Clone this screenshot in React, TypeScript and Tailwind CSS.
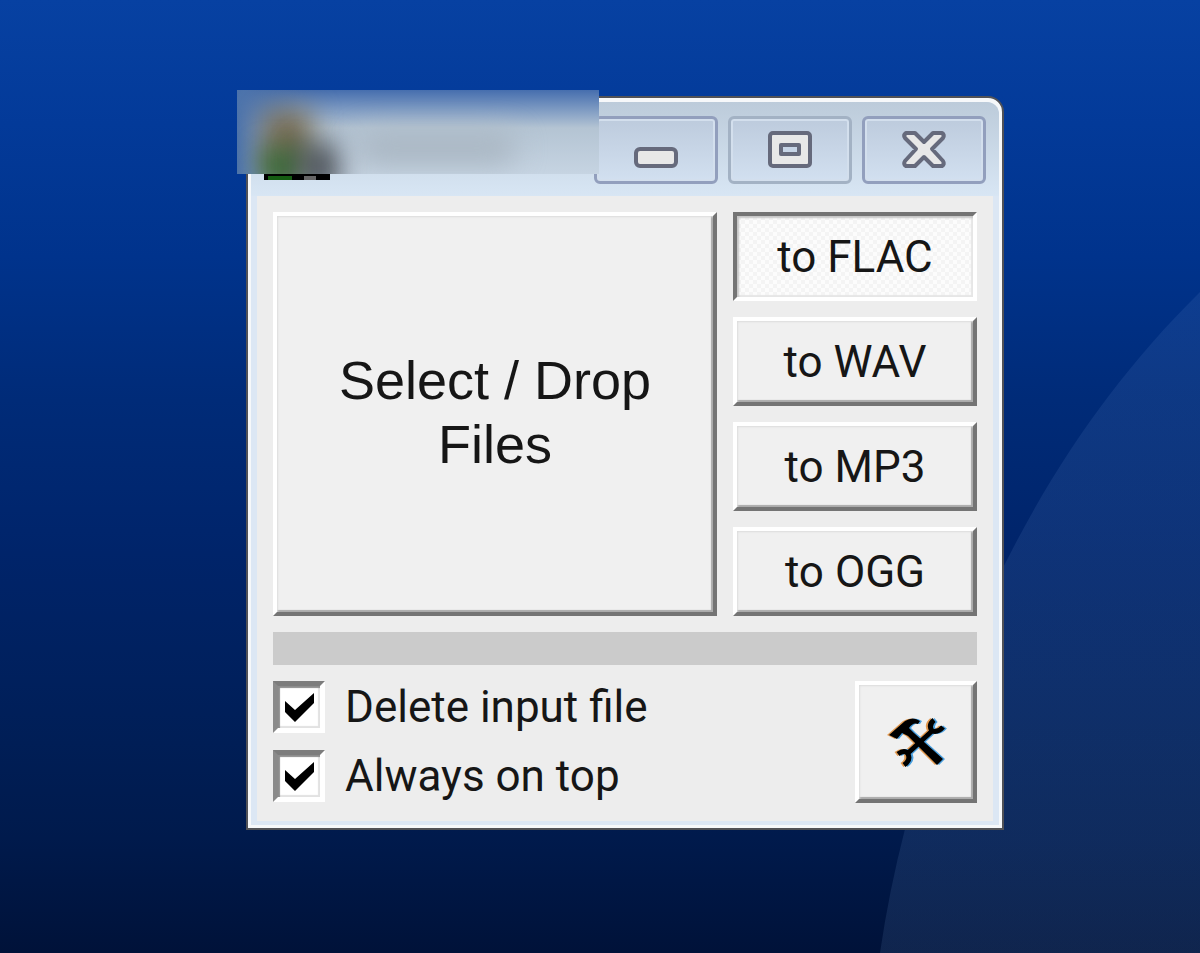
import { useState } from 'react';
import type { ReactNode } from 'react';

const FORMATS = ['FLAC', 'WAV', 'MP3', 'OGG'];

const RAISED =
  'border-4 border-t-white border-l-white border-b-[#747474] border-r-[#747474] bg-[#f0f0f0] shadow-[inset_1px_1px_2px_#dcdcdc,inset_-2px_-2px_1px_#a8a8a8]';
const SUNKEN =
  'border-4 border-t-[#747474] border-l-[#747474] border-b-white border-r-white bg-[repeating-conic-gradient(#fcfcfc_0_25%,#f4f4f4_0_50%)] bg-[length:8px_8px] shadow-[inset_2px_2px_2px_#c4c4c4,inset_-2px_-2px_1px_#e6e6e6]';

function Wallpaper() {
  return (
    <svg
      className="absolute inset-0 h-full w-full"
      viewBox="0 0 1200 953"
      preserveAspectRatio="none"
      aria-hidden="true"
    >
      <defs>
        <linearGradient id="glow" x1="0" y1="0" x2="0" y2="1">
          <stop offset="0" stopColor="#6a90d0" stopOpacity="0.13" />
          <stop offset="1" stopColor="#7098cc" stopOpacity="0.14" />
        </linearGradient>
      </defs>
      <path d="M1200 292C1120 371 1058 459 1007 560C957 655 923 737 905 829Q889 891 880 953H1200Z" fill="url(#glow)" />
    </svg>
  );
}

function CaptionButton({ label, dim, children }: { label: string; dim?: boolean; children: ReactNode }) {
  return (
    <button
      type="button"
      aria-label={label}
      className={`flex h-[68px] w-[124px] items-center justify-center rounded-md border-[3px] bg-gradient-to-b from-[#bdcbdd] to-[#d2e0f0] shadow-[inset_0_0_0_2px_#d3dfed] ${
        dim ? 'border-[#a3b2c4]' : 'border-[#929fbd]'
      }`}
    >
      <svg width="50" height="44" viewBox="0 0 50 44" fill="#e8e8e8" stroke="#666a7c" strokeWidth="4" strokeLinejoin="round">
        {children}
      </svg>
    </button>
  );
}

function CheckRow({ id, label }: { id: string; label: string }) {
  const [checked, setChecked] = useState(true);

  return (
    <div className="flex items-center gap-5">
      <div className="relative size-[52px] shrink-0">
        <input
          id={id}
          type="checkbox"
          checked={checked}
          onChange={(e) => setChecked(e.target.checked)}
          className="block size-full appearance-none border-[5px] border-t-[#7c7c7c] border-r-white border-b-white border-l-[#8a8a8a] bg-white shadow-[inset_2px_2px_1px_#8c8c8c,inset_-2px_-2px_1px_#e2e2e2]"
        />
        {checked && (
          <svg className="pointer-events-none absolute inset-0" viewBox="0 0 52 52" aria-hidden="true">
            <path d="M12 20L22 29L41 12V22L22 41L12 31Z" fill="#000" />
          </svg>
        )}
      </div>
      <label htmlFor={id} className="font-[Roboto,sans-serif] text-[44px] leading-[52px] whitespace-nowrap">
        {label}
      </label>
    </div>
  );
}

function ToolsShape() {
  return (
    <>
      <path
        d="M2 19L10 12L18 5Q26 0 33 5L31 8Q26 6 22 12L27 17L56 43L50 49L21 20L15 17L10 23Z"
        stroke="none"
      />
      <path
        d="M47 4Q41 9 45 15Q51 17 56 11M45 15L20 38M11 38Q18 33 21 38Q24 44 17 49"
        fill="none"
        strokeWidth="5"
      />
    </>
  );
}

// smeared-out icon and title at the left end of the caption
function BlurredCaption() {
  return (
    <div className="absolute -top-2 -left-[11px] h-[84px] w-[362px] overflow-hidden bg-gradient-to-b from-[#466eae] via-[#b4c4d3] via-45% to-[#c6d4e2]">
      <div className="absolute inset-y-0 left-0 w-16 bg-gradient-to-r from-[#4c73ac] to-transparent" />
      <div className="absolute top-5 left-[26px] h-16 w-12 bg-[#766a50] blur-[14px]" />
      <div className="absolute top-[58px] left-6 h-10 w-11 bg-[#3d6b38] blur-[12px]" />
      <div className="absolute top-[54px] left-[62px] h-12 w-10 bg-[#4c525a] blur-[14px]" />
      <div className="absolute top-[42px] left-[120px] h-8 w-40 rounded-full bg-[#a9b6c2] blur-[14px]" />
    </div>
  );
}

export default function App() {
  const [format, setFormat] = useState('FLAC');

  return (
    <main className="relative flex min-h-screen items-start justify-center bg-[linear-gradient(#0741a2,#033a99_13%,#00338c_27%,#002b78_42%,#00246a_58%,#001e56_78%,#001a4c_88%,#001239)] pt-24 pl-[50px] font-['Liberation_Sans',Arial,sans-serif] text-[#161616]">
      <Wallpaper />

      <section
        aria-label="Audio converter"
        className="relative w-full max-w-[758px] rounded-t-2xl border-2 border-[#515257] bg-[#f6f8fa]"
      >
        <div className="m-[3px] mt-1 rounded-t-xl bg-[#dce7f4] px-[6px] pb-1">
          <header className="-mx-[6px] flex h-[94px] items-start justify-between rounded-t-xl bg-gradient-to-b from-[#bccbda] to-[#d8e6f4] pt-[14px] pr-[13px] pl-[13px]">
            <div className="flex h-16 w-[66px] items-end gap-3 bg-black px-1">
              <span className="h-1 w-6 bg-[#155c12]" />
              <span className="h-1 w-3 bg-[#666]" />
            </div>
            <div className="flex gap-[10px]">
              <CaptionButton label="Minimize">
                <rect x="5" y="21" width="40" height="17" rx="4" />
              </CaptionButton>
              <CaptionButton label="Maximize" dim>
                <rect x="5" y="5" width="40" height="33" rx="3" />
                <rect x="16" y="17" width="18" height="9" fill="#c6d4e6" />
              </CaptionButton>
              <CaptionButton label="Close">
                <path d="M7 5H16L25 14L34 5H43Q46 7 44 10L33 21L44 33Q46 36 43 38H34L25 29L16 38H7Q4 36 6 33L17 21L6 10Q4 7 7 5Z" />
              </CaptionButton>
            </div>
          </header>

          <div className="bg-[#ededed] px-4 pt-4 pb-[18px]">
            <div className="flex gap-4">
              <button type="button" className={`flex-1 pb-1 text-[54px] leading-16 ${RAISED}`}>
                Select / Drop
                <br />
                Files
              </button>
              <div className="flex w-[244px] flex-col gap-4 font-[Roboto,sans-serif] text-[44px]">
                {FORMATS.map((f) => (
                  <button
                    key={f}
                    type="button"
                    aria-pressed={format === f}
                    onClick={() => setFormat(f)}
                    className={`h-[89px] leading-[80px] ${format === f ? SUNKEN : RAISED}`}
                  >
                    to {f}
                  </button>
                ))}
              </div>
            </div>

            <div role="progressbar" aria-label="Progress" aria-valuenow={0} className="mt-4 h-[33px] bg-[#cbcbcb]" />

            <div className="mt-4 flex items-start justify-between">
              <div className="flex flex-col gap-[17px]">
                <CheckRow id="delete-input" label="Delete input file" />
                <CheckRow id="on-top" label="Always on top" />
              </div>
              <button type="button" aria-label="Settings" className={`flex size-[122px] items-center justify-center ${RAISED}`}>
                <svg width="64" height="56" viewBox="-3 -2 64 56" aria-hidden="true">
                  <g fill="#e39a50" stroke="#e39a50" transform="translate(-2 0)">
                    <ToolsShape />
                  </g>
                  <g fill="#4aa0e0" stroke="#4aa0e0" transform="translate(2 0)">
                    <ToolsShape />
                  </g>
                  <g fill="#000" stroke="#000">
                    <ToolsShape />
                  </g>
                </svg>
              </button>
            </div>
          </div>
        </div>

        <BlurredCaption />
      </section>
    </main>
  );
}
